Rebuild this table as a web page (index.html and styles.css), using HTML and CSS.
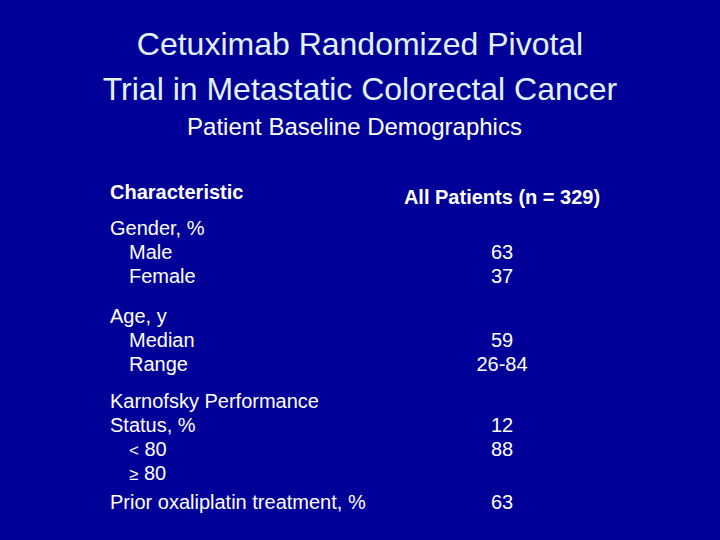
FILE: index.html
```html
<!DOCTYPE html>
<html lang="en">
<head>
<meta charset="utf-8">
<title>Cetuximab Randomized Pivotal Trial</title>
<link rel="stylesheet" href="styles.css">
</head>
<body>
<div class="slide">
  <h1 class="title">Cetuximab Randomized Pivotal<br>Trial in Metastatic Colorectal Cancer</h1>
  <h2 class="subtitle">Patient Baseline Demographics</h2>
  <div class="table">
    <div class="row head">
      <div class="label">Characteristic</div>
      <div class="value">All Patients (n = 329)</div>
    </div>
    <div class="row group g-gender">
      <div class="label">
        <div class="line">Gender, %</div>
        <div class="line indent">Male</div>
        <div class="line indent">Female</div>
      </div>
      <div class="value">
        <div class="line"></div>
        <div class="line">63</div>
        <div class="line">37</div>
      </div>
    </div>
    <div class="row group g-age">
      <div class="label">
        <div class="line">Age, y</div>
        <div class="line indent">Median</div>
        <div class="line indent">Range</div>
      </div>
      <div class="value">
        <div class="line"></div>
        <div class="line">59</div>
        <div class="line">26-84</div>
      </div>
    </div>
    <div class="row group g-karnofsky">
      <div class="label">
        <div class="line">Karnofsky Performance</div>
        <div class="line">Status, %</div>
        <div class="line indent"><span class="sym">&lt;</span> 80</div>
        <div class="line indent"><span class="sym">&ge;</span> 80</div>
      </div>
      <div class="value">
        <div class="line"></div>
        <div class="line">12</div>
        <div class="line">88</div>
        <div class="line"></div>
      </div>
    </div>
    <div class="row group g-prior">
      <div class="label">
        <div class="line">Prior oxaliplatin treatment, %</div>
      </div>
      <div class="value">
        <div class="line">63</div>
      </div>
    </div>
  </div>
</div>
</body>
</html>
```
FILE: styles.css
```css
html, body {
  margin: 0;
  padding: 0;
  background: #000099;
}

.slide {
  width: 720px;
  height: 540px;
  background: #000099;
  color: #ffffff;
  font-family: "Liberation Sans", Arial, sans-serif;
  overflow: hidden;
  display: flex;
  flex-direction: column;
}

.title {
  margin: 22px 0 0;
  font-size: 32px;
  line-height: 45px;
  font-weight: normal;
  text-align: center;
  color: #e2f3ff;
}

.subtitle {
  margin: 0 11px 0 0;
  font-size: 24px;
  line-height: 30px;
  font-weight: normal;
  text-align: center;
  color: #ffffff;
}

.table {
  margin-top: 38px;
  padding-left: 110px;
  display: flex;
  flex-direction: column;
}

.row {
  display: grid;
  grid-template-columns: 292px 200px;
  font-size: 20px;
  line-height: 24px;
}

.row .value {
  text-align: center;
}

.head {
  font-weight: bold;
}

.head .value {
  padding-top: 5px;
}

.line {
  height: 24px;
  white-space: nowrap;
}

.indent {
  padding-left: 19px;
}

.sym {
  font-size: 17px;
}

.g-gender {
  margin-top: 7px;
}

.g-age {
  margin-top: 16px;
}

.g-karnofsky {
  margin-top: 13px;
}

.g-prior {
  margin-top: 5px;
}
```
